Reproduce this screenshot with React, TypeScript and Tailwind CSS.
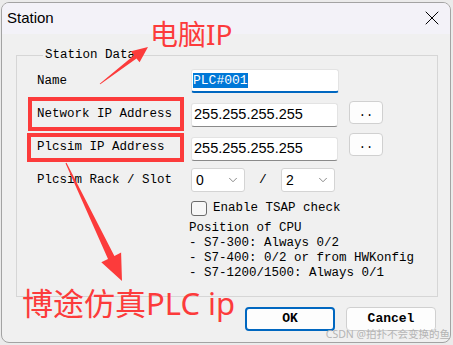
import { ChevronDown, X } from "lucide-react";

const mono = "font-['Liberation_Mono',monospace]";

function IpRow({ label, value }: { label: string; value: string }) {
  return (
    <>
      <span className={`w-[154px] self-center text-[12.5px] ${mono}`}>{label}</span>
      <div className="self-end w-[147px] h-[24px] bg-white border border-[#e3e3e3] border-b-[#8a8a8a] rounded-[3px] flex items-center pl-[2px] text-[14.5px]">
        {value}
      </div>
      <button className={`self-start ml-[11px] w-[34px] h-[23px] bg-[#fdfdfd] border border-[#d0d0d0] rounded-[4px] text-[12px] ${mono}`}>
        ..
      </button>
    </>
  );
}

function Select({ value }: { value: string }) {
  return (
    <div className="w-[54px] h-[24px] bg-white border border-[#d4d4d4] rounded-[3px] flex items-center justify-between pl-[4px] pr-[4px] text-[14px]">
      <span>{value}</span>
      <ChevronDown className="w-[14px] h-[14px] text-[#707070]" strokeWidth={1.4} />
    </div>
  );
}

export default function App() {
  return (
    <div className="relative w-[453px] h-[345px] bg-[#ebebeb] pt-[2px] pl-[1px] pr-[2px] pb-[2px] font-['Liberation_Sans',sans-serif] text-black">
      <div className="w-full h-full flex flex-col rounded-[8px] border border-[#a3a3a3] overflow-hidden bg-[#f0f0f0]">
        <div className="h-[31px] shrink-0 bg-[#f3f2f8] flex items-center justify-between pl-[5px] pr-[6px]">
          <span className="text-[15px]">Station</span>
          <X className="w-[24px] h-[24px] -mt-[2px]" strokeWidth={1} />
        </div>
        <div className="flex-1 flex flex-col pl-[14px] pr-[12px]">
          <fieldset className="mt-[14px] h-[249px] border border-[#d6d6d6] pl-[20px] pt-[7px] flex flex-col">
            <legend className={`ml-[6px] px-[2px] text-[12.5px] leading-[14px] ${mono}`}>Station Data</legend>

            <div className="flex items-center h-[24px]">
              <span className={`w-[154px] text-[12.5px] ${mono}`}>Name</span>
              <div className="w-[148px] h-[24px] bg-white border border-[#e3e3e3] border-b-2 border-b-[#0067c0] rounded-[3px] flex items-center pl-[1px]">
                <span className={`bg-[#0078d7] text-white text-[13px] leading-[15px] ${mono}`}>PLC#001</span>
              </div>
            </div>

            <div className="flex mt-[8px] h-[26px]">
              <IpRow label="Network IP Address" value="255.255.255.255" />
            </div>

            <div className="flex mt-[6px] h-[28px]">
              <IpRow label="Plcsim IP Address" value="255.255.255.255" />
            </div>

            <div className="flex items-center mt-[7px] h-[24px]">
              <span className={`w-[154px] text-[12.5px] ${mono}`}>Plcsim Rack / Slot</span>
              <Select value="0" />
              <span className={`w-[36px] text-center text-[13px] ${mono}`}>/</span>
              <Select value="2" />
            </div>

            <div className="flex items-center mt-[9px] h-[15px] pl-[154px]">
              <div className="w-[16px] h-[15px] rounded-[3px] border border-[#6b6b6b] bg-[#f7f7f7]" />
              <span className={`ml-[6px] text-[12.5px] ${mono}`}>Enable TSAP check</span>
            </div>

            <div className={`mt-[5px] pl-[152px] text-[12.5px] leading-[15px] whitespace-pre ${mono}`}>
              <div>Position of CPU</div>
              <div>- S7-300: Always 0/2</div>
              <div>- S7-400: 0/2 or from HWKonfig</div>
              <div>- S7-1200/1500: Always 0/1</div>
            </div>
          </fieldset>

          <div className="flex justify-end gap-[11px] mt-[10px] mr-[2px]">
            <button className={`w-[90px] h-[24px] bg-[#fdfdfd] border-2 border-[#0067c0] rounded-[4px] text-[13px] font-bold ${mono}`}>
              OK
            </button>
            <button className={`w-[90px] h-[24px] bg-[#fdfdfd] border border-[#d0d0d0] rounded-[4px] text-[13px] font-bold ${mono}`}>
              Cancel
            </button>
          </div>
        </div>
      </div>

      {/* annotations */}
      <div className="absolute left-[28px] top-[97px] w-[156px] h-[34px] border-[4px] border-[#fc3b3b]" />
      <div className="absolute left-[27px] top-[133px] w-[157px] h-[29px] border-[4px] border-[#fc3b3b]" />
      <svg className="absolute inset-0 pointer-events-none" width="453" height="345" viewBox="0 0 453 345">
        <polygon
          fill="#fc3b3b"
          points="100.3,84.3 136.5,58.4 139.6,62.3 148,47 131,51.3 134.1,55.2 99.7,83.7"
        />
        <polygon
          fill="#fc3b3b"
          points="66.5,162.8 114.4,255.9 121.1,252.6 122,281 101.3,262.2 108,258.9 65.5,163.2"
        />
      </svg>
      <div className="absolute left-[150px] top-[20px] text-[28px] leading-none text-[#fc3b3b] font-['Noto_Sans','Noto_Sans_CJK_SC',sans-serif]">
        电脑IP
      </div>
      <div className="absolute left-[22px] top-[288px] text-[31px] leading-none text-[#fc3b3b] font-['Noto_Sans','Noto_Sans_CJK_SC',sans-serif]">
        博途仿真PLC ip
      </div>
      <div className="absolute right-[3px] bottom-[6px] text-[10.5px] leading-none text-[#b4b4b4] font-['Noto_Sans','Noto_Sans_CJK_SC',sans-serif]">
        CSDN @拍扑不会变换的鱼
      </div>
    </div>
  );
}
